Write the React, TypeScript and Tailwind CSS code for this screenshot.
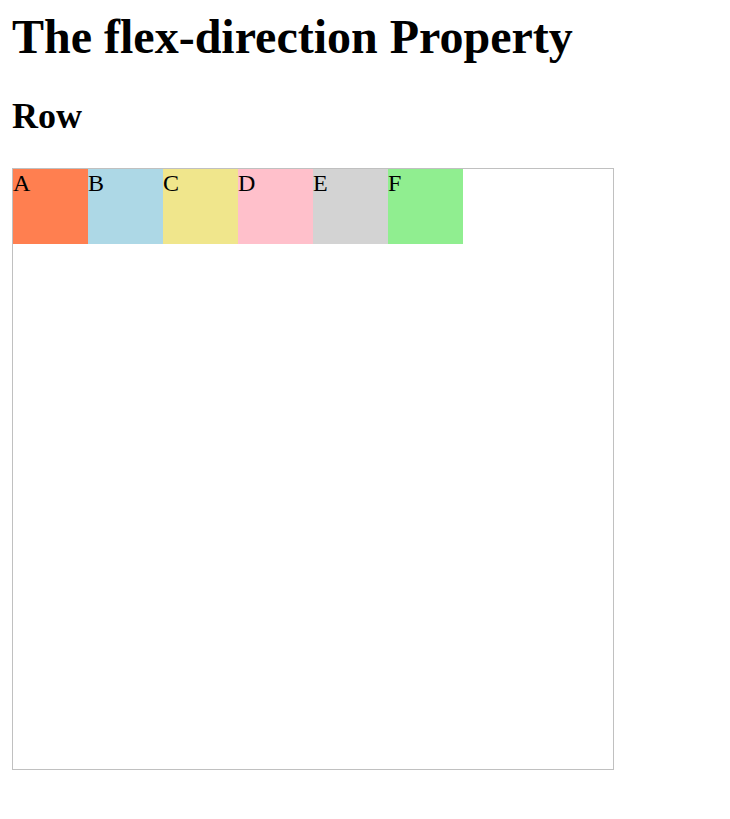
export default function App() {
  const items = [
    { t: "A", c: "bg-[#ff7f50]" },
    { t: "B", c: "bg-[#add8e6]" },
    { t: "C", c: "bg-[#f0e68c]" },
    { t: "D", c: "bg-[#ffc0cb]" },
    { t: "E", c: "bg-[#d3d3d3]" },
    { t: "F", c: "bg-[#90ee90]" },
  ];
  return (
    <div className="min-h-[819px] bg-white px-[12px] pt-[9px] text-black" style={{ fontFamily: '"Liberation Serif", "Times New Roman", serif' }}>
      <h1 className="text-[48px] font-bold leading-[55px]">The flex-direction Property</h1>
      <h2 className="mt-[32px] text-[36px] font-bold leading-[41px]">Row</h2>
      <div className="mt-[31px] flex h-[602px] w-[602px] flex-row border border-[#c0c0c0]">
        {items.map((i) => (
          <div key={i.t} className={`h-[75px] w-[75px] text-[24px] leading-[28px] ${i.c}`}>
            {i.t}
          </div>
        ))}
      </div>
    </div>
  );
}
